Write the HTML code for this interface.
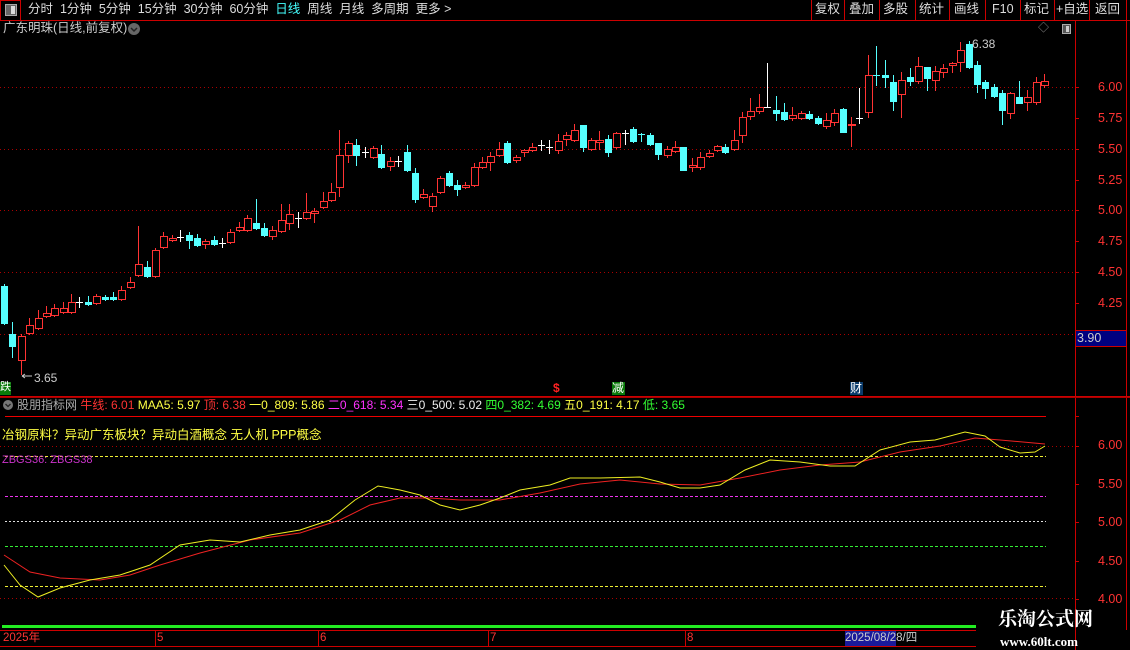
<!DOCTYPE html>
<html><head><meta charset="utf-8">
<style>
*{margin:0;padding:0;box-sizing:border-box}
body{width:1130px;height:650px;background:#000;overflow:hidden;position:relative;font-family:"Liberation Sans","Noto Sans CJK SC",sans-serif;font-size:12px;color:#ccc}
.a{position:absolute;white-space:nowrap;line-height:1}
svg{position:absolute;left:0;top:0}
</style></head><body>
<svg id="s" width="1130" height="650" xmlns="http://www.w3.org/2000/svg"></svg>

<div class="a" style="left:28px;top:3px;font-size:12.5px;color:#ddd;word-spacing:0">分时&nbsp;&nbsp;1分钟&nbsp;&nbsp;5分钟&nbsp;&nbsp;15分钟&nbsp;&nbsp;30分钟&nbsp;&nbsp;60分钟&nbsp;&nbsp;<span style="color:#4ff">日线</span>&nbsp;&nbsp;周线&nbsp;&nbsp;月线&nbsp;&nbsp;多周期&nbsp;&nbsp;更多 &gt;</div>
<div class="a" style="left:3px;top:22px;font-size:12.5px;color:#ccc">广东明珠(日线,前复权)</div>
<div class="a" style="left:1038px;top:23px;font-size:11px;color:#888">◇</div>

<div class="a" style="left:815px;top:3px;font-size:12.5px;color:#ddd">复权</div>
<div class="a" style="left:849px;top:3px;font-size:12.5px;color:#ddd">叠加</div>
<div class="a" style="left:883px;top:3px;font-size:12.5px;color:#ddd">多股</div>
<div class="a" style="left:919px;top:3px;font-size:12.5px;color:#ddd">统计</div>
<div class="a" style="left:954px;top:3px;font-size:12.5px;color:#ddd">画线</div>
<div class="a" style="left:992px;top:3px;font-size:12.5px;color:#ddd">F10</div>
<div class="a" style="left:1024px;top:3px;font-size:12.5px;color:#ddd">标记</div>
<div class="a" style="left:1056px;top:3px;font-size:12.5px;color:#ddd">+自选</div>
<div class="a" style="left:1095px;top:3px;font-size:12.5px;color:#ddd">返回</div>

<div class="a" style="left:1098px;top:81px;font-size:12.5px;color:#f33">6.00</div>
<div class="a" style="left:1098px;top:112px;font-size:12.5px;color:#f33">5.75</div>
<div class="a" style="left:1098px;top:143px;font-size:12.5px;color:#f33">5.50</div>
<div class="a" style="left:1098px;top:174px;font-size:12.5px;color:#f33">5.25</div>
<div class="a" style="left:1098px;top:204px;font-size:12.5px;color:#f33">5.00</div>
<div class="a" style="left:1098px;top:235px;font-size:12.5px;color:#f33">4.75</div>
<div class="a" style="left:1098px;top:266px;font-size:12.5px;color:#f33">4.50</div>
<div class="a" style="left:1098px;top:297px;font-size:12.5px;color:#f33">4.25</div>
<div class="a" style="left:1076px;top:331px;width:50px;height:15px;background:#000080;font-size:12.5px;color:#ccc;padding:1px 0 0 1px">3.90</div>
<div class="a" style="left:1098px;top:439px;font-size:12.5px;color:#f33">6.00</div>
<div class="a" style="left:1098px;top:478px;font-size:12.5px;color:#f33">5.50</div>
<div class="a" style="left:1098px;top:516px;font-size:12.5px;color:#f33">5.00</div>
<div class="a" style="left:1098px;top:555px;font-size:12.5px;color:#f33">4.50</div>
<div class="a" style="left:1098px;top:593px;font-size:12.5px;color:#f33">4.00</div>

<div class="a" style="left:34px;top:372px;font-size:12px;color:#ccc">3.65</div>
<div class="a" style="left:972px;top:38px;font-size:12px;color:#ccc">6.38</div>

<div class="a" style="left:0;top:382px;width:11px;height:13px;background:#0a7a0a;color:#fff;font-size:11px">跌</div>
<div class="a" style="left:553px;top:382px;color:#f22;font-size:12px;font-weight:bold">$</div>
<div class="a" style="left:612px;top:382px;width:13px;height:13px;background:#0a7a0a;color:#fff;font-size:12px">减</div>
<div class="a" style="left:850px;top:382px;width:13px;height:13px;background:#0a3a6a;color:#fff;font-size:12px">财</div>

<div class="a" style="left:17px;top:399px;font-size:12px;color:#aaa">股朋指标网 <span style="color:#f33">牛线: 6.01</span> <span style="color:#ff4">MAA5: 5.97</span> <span style="color:#f33">顶: 6.38</span> <span style="color:#ff4">一0_809: 5.86</span> <span style="color:#f3f">二0_618: 5.34</span> <span style="color:#eee">三0_500: 5.02</span> <span style="color:#3f3">四0_382: 4.69</span> <span style="color:#ff4">五0_191: 4.17</span> <span style="color:#3f3">低: 3.65</span></div>
<div class="a" style="left:2px;top:429px;font-size:12.5px;color:#ff4">冶钢原料？异动广东板块？异动白酒概念 无人机 PPP概念</div>
<div class="a" style="left:2px;top:455px;font-size:11px;color:#c3c">ZBGS36: ZBGS38</div>

<div class="a" style="left:3px;top:633px;font-size:11.5px;color:#f33">2025年</div>
<div class="a" style="left:157px;top:633px;font-size:11.5px;color:#f33">5</div>
<div class="a" style="left:320px;top:633px;font-size:11.5px;color:#f33">6</div>
<div class="a" style="left:490px;top:633px;font-size:11.5px;color:#f33">7</div>
<div class="a" style="left:687px;top:633px;font-size:11.5px;color:#f33">8</div>
<div class="a" style="left:845px;top:631px;width:51px;height:15px;background:#1a1a9a;font-size:11.5px;color:#ccc;padding-top:2px">2025/08/28/四</div>

<div class="a" style="left:998px;top:610px;font-size:19px;font-weight:bold;color:#fff;font-family:'Liberation Serif','Noto Serif CJK SC',serif">乐淘公式网</div>
<div class="a" style="left:1000px;top:635px;font-size:13px;font-weight:bold;color:#fff;font-family:'Liberation Serif',serif">www.60lt.com</div>

<script>
var S=document.getElementById('s'),h='';
function L(x1,y1,x2,y2,c,w,d){h+='<line x1="'+x1+'" y1="'+y1+'" x2="'+x2+'" y2="'+y2+'" stroke="'+c+'" stroke-width="'+(w||1)+'"'+(d?' stroke-dasharray="'+d+'"':'')+'/>';}
function R(x,y,w,ht,f,s){h+='<rect x="'+x+'" y="'+y+'" width="'+w+'" height="'+ht+'" fill="'+f+'"'+(s?' stroke="'+s+'"':'')+'/>';}
L(0,20.5,1130,20.5,'#c00');
R(0.5,0.5,20,20,'none','#c00');
R(5.5,4.5,11,11,'#666','#aaa');R(11,6,4,8,'#ddd');
[811,844,879,915,949,985,1020,1054,1089,1126].forEach(function(x){L(x+.5,0,x+.5,20,'#c00');});
h+='<circle cx="134" cy="29" r="6" fill="#666"/><path d="M131,28 L134,31 L137,28" stroke="#222" stroke-width="1.5" fill="none"/>';
R(1062.5,24.5,8,9,'#555','#aaa');R(1066,26,3,6,'#ccc');
[87,149,210,272,334].forEach(function(y){L(0,y+.5,1074,y+.5,'#a00',1,'1 3');});
L(1075.5,20,1075.5,650,'#c00');L(1126.5,20,1126.5,630,'#c00');
[87,118,149,180,210,241,272,303].forEach(function(y){L(1075,y+.5,1079,y+.5,'#c00');});
[416,446,484,522,561,599].forEach(function(y){L(1075,y+.5,1079,y+.5,'#c00');});
L(1076,330.5,1127,330.5,'#c00');L(1076,346.5,1127,346.5,'#c00');
L(0,396.5,1130,396.5,'#c00');L(0,397.5,1130,397.5,'#a00');
var D=[['c',286,323],['c',334,346,322,358],['r',336,360,334,375],['r',325,333,318],['r',318,328,310],['r',313,316,306],['r',308,315,304],['r',308,312,302],['r',302,312,294],['w',302,302,297,308],['c',302,304,296],['r',296,303,294],['c',297,299,295],['c',297,299,292],['r',290,299,286],['r',282,287,277],['r',264,275,226],['c',267,276,261],['r',250,276,248],['r',236,247,232],['r',238,240,235],['w',237,237,230,242],['c',235,240,232,249],['c',238,245,234],['r',241,244,239,249],['c',240,244,236],['w',243,243,238,248],['r',232,242,229],['r',227,230,222],['r',218,230,215],['c',223,228,199],['c',228,235,223],['r',230,236,226,240],['r',220,231,204],['r',214,223,204,230],['w',218,218,212,228],['r',212,218,193],['r',211,213,208,223],['r',201,207,192],['r',192,200,183],['r',155,187,130,197],['r',143,155,141,163],['c',145,155,139,166],['w',152,152,147,158],['r',148,157,146],['c',154,167,145],['r',161,166,157,171],['w',161,161,156,167],['c',152,170,145],['c',173,199,168,203],['r',194,197,189],['r',196,206,193,212],['r',178,192,176],['c',173,185],['c',185,189,180,196],['r',185,187,182],['r',167,185,163],['r',162,167,157],['r',156,162,152,171],['r',149,155,142],['c',143,162],['r',157,160,155,163],['r',150,152,149,157],['r',147,150,143],['w',145,145,140,151],
['w',147,147,140,154],['r',141,150,134,154],['r',135,139,132,146],['r',130,140,124],['c',125,147,125,152],['r',140,149],['r',140,142,131,150],['c',139,152,135,157],['r',133,147,132],['w',133,133,130,145],['c',129,141],['c',134,134,133,142],['c',135,144,133],['c',143,154,143,160],['r',149,155,146,158],['r',147,151,141,153],['c',147,170,147,171],['r',165,167,158,172],['r',157,167,152,170],['r',153,156,150],['r',146,150,145],['c',147,152,144,154],['r',140,149,130],['r',117,135,112,143],['r',111,116,98,120],['r',107,111,94,114],['w',107,107,63,107],['c',110,113,96,121],['c',112,119,103,121],['r',115,118,107,121],['r',113,118],['c',114,118,111,120],['c',118,123],['r',120,126,113,129],['r',113,122,109,126],['c',109,132,108,133],['r',124,125,117,147],['w',118,118,88,124],['r',75,112,55,118],['c',75,75,46,86],['c',75,77,60,88],['c',82,101,75,111],['r',80,94,72,118],['c',77,81,68,86],['r',66,81,57,84],['c',67,78,67,91],['r',71,80,66,91],['r',68,72,64,78],['r',63,65,62,73],['r',50,62,42,72],['c',44,67,41,69],['c',65,84,61,93],['c',82,88,80,99],['c',87,96,84],['c',93,110,90,125],['r',93,113,92,119],['c',97,103,81,104],['r',97,102,90,111],['r',82,102,77,105],['r',81,85,74,88]];
var n=D.length,sp=(1044-4)/(n-1);
D.forEach(function(d,i){var x=Math.round(4+i*sp),t=d[1],b=d[2],hi=d[3]||t-2,lo=d[4]||b+2;
var col=d[0]=='r'?'#f33':d[0]=='c'?'#5ff':'#fff';
L(x+.5,hi,x+.5,lo,col);
if(d[0]=='w'||b-t<1){L(x-3,t+.5,x+4,t+.5,col);}
else if(d[0]=='r'){R(x-2.5,t+.5,7,b-t,'#000',col);}
else R(x-3,t,7,b-t+1,col);});
h+='<path d="M22,376 h10 M22,376 l3,-2 M22,376 l3,2" stroke="#ccc" fill="none"/>';
L(5,416.5,1046,416.5,'#e00');
L(5,456.5,1046,456.5,'#ee3',1,'3 2');
L(5,496.5,1046,496.5,'#e3e',1,'3 2');
L(5,521.5,1046,521.5,'#ddd',1,'2 2');
L(5,546.5,1046,546.5,'#3e3',1,'3 2');
L(5,586.5,1046,586.5,'#ee3',1,'3 2');
L(0,598.5,1074,598.5,'#a00',1,'1 3');
L(0,446.5,1074,446.5,'#a00',1,'1 3');
h+='<polyline fill="none" stroke="#e22" points="4,555 30,572 60,578 100,580 130,575 160,565 200,553 250,540 300,533 340,520 370,505 400,498 430,498 460,500 500,500 540,493 580,484 620,480 660,484 700,485 740,478 780,470 820,465 860,462 900,452 940,446 975,438 1000,440 1045,444"/>';
h+='<polyline fill="none" stroke="#ee2" points="4,565 20,585 38,597 60,588 90,580 120,575 150,565 180,545 210,540 240,542 270,535 300,530 330,520 355,500 378,486 400,490 420,495 440,505 460,510 480,505 500,498 520,490 550,485 570,478 600,478 640,477 660,482 680,488 700,488 720,485 745,470 770,460 800,462 830,466 855,466 880,450 910,442 935,440 965,432 985,436 1000,447 1020,453 1035,452 1045,446"/>';
h+='<circle cx="8" cy="405" r="5" fill="#777"/><path d="M5.5,404 L8,406.5 L10.5,404" stroke="#222" stroke-width="1.3" fill="none"/>';
L(2,626.5,976,626.5,'#2e2',3);
L(0,630.5,976,630.5,'#c00');L(0,646.5,976,646.5,'#c00');
[155,318,488,685].forEach(function(x){L(x+.5,631,x+.5,646,'#c00');});
S.innerHTML=h;
</script>
</body></html>
